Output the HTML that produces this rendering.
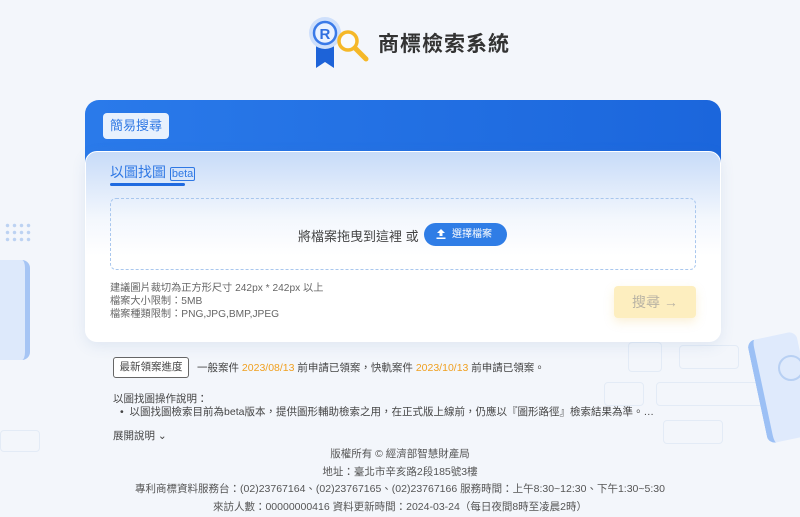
<!DOCTYPE html>
<html><head><meta charset="utf-8"><style>
*{margin:0;padding:0;box-sizing:border-box}
body{width:800px;height:517px;overflow:hidden;background:#f3f6fb;font-family:"Liberation Sans","Noto Sans CJK TC",sans-serif;position:relative;color:#333}
.abs{position:absolute}
.ghost{position:absolute;border:1px solid #e3ebf6;border-radius:4px}
</style></head><body>
<div class="ghost" style="left:628px;top:342px;width:34px;height:30px"></div>
<div class="ghost" style="left:679px;top:345px;width:60px;height:24px"></div>
<div class="ghost" style="left:656px;top:382px;width:140px;height:24px"></div>
<div class="ghost" style="left:604px;top:382px;width:40px;height:24px"></div>
<div class="ghost" style="left:663px;top:420px;width:60px;height:24px"></div>
<div class="ghost" style="left:0;top:430px;width:40px;height:22px"></div>
<div class="abs" style="left:757px;top:335px;width:50px;height:105px;background:#dfeafc;border-radius:8px;transform:rotate(-12deg);border-left:6px solid #9cc0f5"></div>
<div class="abs" style="left:778px;top:355px;width:26px;height:26px;border:2px solid #b8d0f3;border-radius:50%"></div>
<div class="abs" style="left:0;top:260px;width:30px;height:100px;background:#dde9fb;border-radius:0 8px 8px 0;border-right:5px solid #a6c5f4"></div>
<div class="abs" style="left:4px;top:222px;width:28px;height:20px;background:radial-gradient(#bcd2f2 1.5px,transparent 2px) 0 0/7px 7px"></div>
<svg class="abs" style="left:306px;top:12px" width="68" height="58" viewBox="0 0 68 58">
<rect x="10" y="30" width="18" height="26" fill="#1d63d8"/><path d="M10 56 L19 50 L28 56" fill="#f3f6fb"/>
<circle cx="19" cy="21" r="16" fill="#cfe0fb"/><circle cx="19" cy="21" r="11" fill="#eaf2ff" stroke="#3a7ae8" stroke-width="2.5"/>
<text x="13.5" y="27" font-size="15" font-weight="bold" fill="#2f6fe0" font-family="Liberation Sans">R</text>
<circle cx="42" cy="29" r="9" fill="rgba(255,255,255,.5)" stroke="#f5b828" stroke-width="3.5"/>
<line x1="49" y1="36" x2="60" y2="47" stroke="#f5b828" stroke-width="5" stroke-linecap="round"/>
</svg>
<div class="abs" style="left:378px;top:28px;font-size:21px;font-weight:bold;color:#333;letter-spacing:1px">商標檢索系統</div>
<div class="abs" style="left:85px;top:100px;width:636px;height:90px;background:linear-gradient(90deg,#2a7aea,#1b66dc);border-radius:14px"></div>
<div class="abs" style="left:103px;top:113px;width:66px;height:26px;background:#e8f1fd;border-radius:4px;color:#2f78e4;font-size:13px;line-height:26px;text-align:center">簡易搜尋</div>
<div class="abs" style="left:85px;top:151px;width:636px;height:191px;background:linear-gradient(180deg,#c7dbf8 0%,#f3f7fd 35%,#fff 55%);border:1px solid #fff;border-radius:12px;box-shadow:0 4px 14px rgba(80,120,180,.12)"></div>
<div class="abs" style="left:110px;top:162px;font-size:14px;color:#2f78e4">以圖找圖 <span style="font-size:11px;border:1px solid #2f78e4;border-radius:2px;padding:0 1px">beta</span></div>
<div class="abs" style="left:110px;top:183px;width:75px;height:3px;background:#1f6ae0;border-radius:2px"></div>
<div class="abs" style="left:110px;top:198px;width:586px;height:72px;border:1px dashed #a9c7ee;border-radius:6px"></div>
<div class="abs" style="left:298px;top:226px;font-size:13px;color:#444">將檔案拖曳到這裡 或</div>
<div class="abs" style="left:424px;top:223px;width:83px;height:23px;background:#2f7de6;border-radius:12px;color:#fff;font-size:10px;line-height:23px;padding-left:28px">選擇檔案</div>
<svg class="abs" style="left:435px;top:228px" width="12" height="12" viewBox="0 0 12 12"><path d="M6 1 L2 5 H4.5 V8 H7.5 V5 H10 Z M1.5 9.5 H10.5 V11 H1.5 Z" fill="#fff"/></svg>
<div class="abs" style="left:110px;top:282px;font-size:10.2px;color:#666;line-height:13px">建議圖片裁切為正方形尺寸 242px * 242px 以上<br>檔案大小限制：5MB<br>檔案種類限制：PNG,JPG,BMP,JPEG</div>
<div class="abs" style="left:614px;top:286px;width:82px;height:32px;background:#fdeebf;border-radius:4px;color:#b9b3a4;font-size:14px;line-height:32px;text-align:center;box-shadow:0 4px 10px rgba(240,200,100,.25)">搜尋 →</div>
<div class="abs" style="left:113px;top:357px;width:76px;height:21px;border:1px solid #666;border-radius:3px;font-size:10.5px;line-height:19px;text-align:center;color:#444;background:#fff">最新領案進度</div>
<div class="abs" style="left:197px;top:360px;font-size:10.5px;color:#444">一般案件 <span style="color:#f0a020">2023/08/13</span> 前申請已領案，快軌案件 <span style="color:#f0a020">2023/10/13</span> 前申請已領案。</div>
<div class="abs" style="left:113px;top:391px;font-size:10.5px;color:#444">以圖找圖操作說明：</div>
<div class="abs" style="left:120px;top:404px;font-size:10.5px;color:#444">•&nbsp;&nbsp;以圖找圖檢索目前為beta版本，提供圖形輔助檢索之用，在正式版上線前，仍應以『圖形路徑』檢索結果為準。…</div>
<div class="abs" style="left:113px;top:428px;font-size:10.5px;color:#444">展開說明 ⌄</div>
<div class="abs" style="left:0;top:446px;width:800px;text-align:center;font-size:10.5px;color:#555;line-height:17.5px">版權所有 © 經濟部智慧財產局<br>地址：臺北市辛亥路2段185號3樓<br>專利商標資料服務台：(02)23767164、(02)23767165、(02)23767166 服務時間：上午8:30~12:30、下午1:30~5:30<br>來訪人數：00000000416 資料更新時間：2024-03-24（每日夜間8時至凌晨2時）</div>
</body></html>
